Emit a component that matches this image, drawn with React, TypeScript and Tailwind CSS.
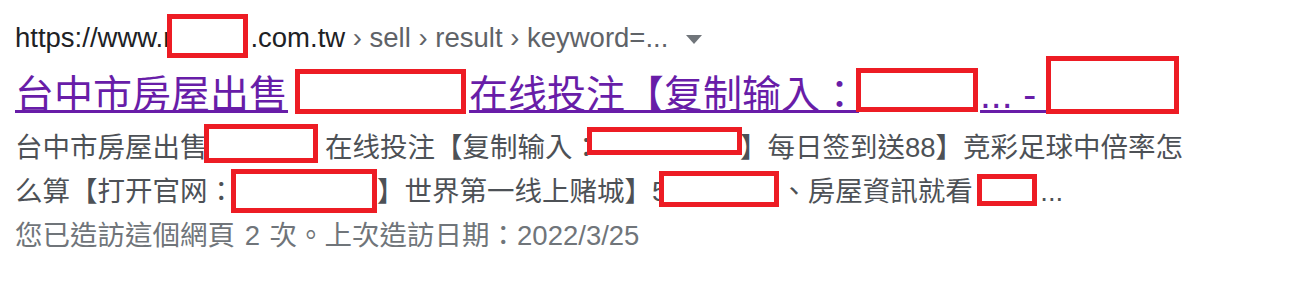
const Redact = ({ wrap, box }: { wrap: string; box: string }) => (
  <span className={`relative inline-block h-0 align-top ${wrap}`}>
    <span className={`absolute border-[5px] border-[#ed1c24] bg-white ${box}`} />
  </span>
);

const DropArrow = () => (
  <svg width="16" height="9" viewBox="0 0 16 9" className="ml-[18px] inline-block align-middle">
    <polygon points="0,0 16,0 8,9" fill="#70757a" />
  </svg>
);

export default function App() {
  const font = { fontFamily: '"Liberation Sans", "Noto Sans CJK TC", "Noto Sans CJK SC", sans-serif' };

  return (
    <div className="h-[289px] w-[1306px] overflow-hidden bg-white pl-[15px] pt-[16px]" style={font}>
      {/* url / breadcrumb */}
      <div className="h-[44px] whitespace-nowrap text-[27.5px] leading-[44px] text-[#202124]">
        https://www.r
        <Redact wrap="w-[78px]" box="-left-[5px] -top-[2px] h-[44px] w-[81px]" />
        .com.tw
        <span className="text-[#5f6368]"> › sell › result › keyword=...</span>
        <DropArrow />
      </div>

      {/* title */}
      <div className="mt-[9px] h-[52px] whitespace-nowrap text-[39px] leading-[52px]">
        <a className="text-[#681da8] underline decoration-[3px] underline-offset-[2px]">
          台中市房屋出售
          <Redact wrap="w-[181px]" box="left-[7px] top-0 h-[45px] w-[171px]" />
          在线投注【复制输入：
          <Redact wrap="w-[121px]" box="-left-[3px] -top-[1px] h-[44px] w-[122px]" />
          {"... - "}
        </a>
        <Redact wrap="w-[1px]" box="-left-[1px] -top-[13px] h-[58px] w-[133px]" />
      </div>

      {/* snippet */}
      <div className="mt-[5px] whitespace-nowrap text-[27.5px] leading-[44px] text-[#4d5156]">
        <div className="h-[44px]">
          台中市房屋出售
          <Redact wrap="w-[117.5px]" box="-left-[3.5px] -top-[2px] h-[39px] w-[114px]" />
          在线投注【复制输入：
          <Redact wrap="w-[140px]" box="-left-[13px] top-[1px] h-[28px] w-[155px]" />
          】每日签到送88】竞彩足球中倍率怎
        </div>
        <div className="h-[44px]">
          么算【打开官网：
          <Redact wrap="w-[142px]" box="-left-[4px] -top-[1px] h-[44px] w-[146px]" />
          】世界第一线上赌城】5
          <Redact wrap="w-[113px]" box="-left-[8px] top-[1px] h-[36px] w-[120px]" />
          、房屋資訊就看
          <Redact wrap="w-[67.5px]" box="left-[4.5px] top-[4px] h-[32px] w-[60px]" />
          ...
        </div>
        <div className="h-[44px] text-[#70757a]">
          您已造訪這個網頁 <span className="mx-[2px]">2</span> 次。上次造訪日期：2022/3/25
        </div>
      </div>
    </div>
  );
}
